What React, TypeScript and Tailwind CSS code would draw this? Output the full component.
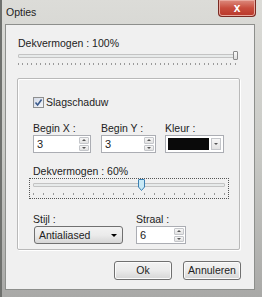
import React from "react";

const font = { fontFamily: '"Liberation Sans", Arial, sans-serif' };

function Ticks({ count, className }: { count: number; className: string }) {
  return (
    <div className={`flex justify-between ${className}`}>
      {Array.from({ length: count }).map((_, i) => (
        <span key={i} className="w-px h-[2px] bg-[#9a9a9a]" />
      ))}
    </div>
  );
}

function SpinBox({ value, width }: { value: string; width: string }) {
  return (
    <div className={`${width} h-[18px] flex items-center border border-[#abadb3] bg-white`}>
      <span className="flex-1 pl-[3px] text-[11px] leading-none">{value}</span>
      <div className="flex flex-col h-full py-px pr-px gap-px">
        <div className="w-[10px] flex-1 border border-[#c4c6ca] rounded-[1px] bg-gradient-to-b from-[#f6f6f6] to-[#e2e2e2] flex items-center justify-center">
          <span className="w-0 h-0 border-x-[2px] border-x-transparent border-b-[2px] border-b-[#555]" />
        </div>
        <div className="w-[10px] flex-1 border border-[#c4c6ca] rounded-[1px] bg-gradient-to-b from-[#f6f6f6] to-[#e2e2e2] flex items-center justify-center">
          <span className="w-0 h-0 border-x-[2px] border-x-transparent border-t-[2px] border-t-[#555]" />
        </div>
      </div>
    </div>
  );
}

function Button({ label }: { label: string }) {
  return (
    <div className="w-[58px] h-[19px] border border-[#707070] rounded-[3px] bg-gradient-to-b from-[#f2f2f2] via-[#ebebeb] to-[#d6d6d6] flex items-center justify-center text-[10.5px] shadow-[inset_0_0_0_1px_#fbfbfb]">
      {label}
    </div>
  );
}

export default function App() {
  return (
    <div
      className="w-[262px] h-[297px] overflow-hidden flex flex-col bg-gradient-to-b from-[#dcdcd8] via-[#c9cac6] to-[#a9a9a7] border-l-2 border-l-[#6f716e] text-[#222]"
      style={font}
    >
      {/* title bar */}
      <div className="h-[22px] flex justify-between items-start pl-[4px] pr-[6px]">
        <span className="pt-[5px] text-[10.5px] leading-[14px] text-[#1e1e1e]">Opties</span>
        <div className="w-[38px] h-[17px] rounded-b-[4px] border border-t-0 border-[#7a2a22] bg-gradient-to-b from-[#dc8a7e] via-[#c84d3e] to-[#b8372a] flex items-center justify-center shadow-[inset_0_0_0_1px_#e9a89e]">
          <span className="text-white text-[12px] font-bold leading-none -mt-px">x</span>
        </div>
      </div>

      {/* client area */}
      <div className="ml-[3px] mr-[7px] mt-[2px] h-[266px] bg-[#f0f0f0] border border-[#8d8f8c] flex flex-col text-[10.5px]">
        <div className="pl-[12px] pr-[16px] pt-[11px]">
          <div className="leading-[14px]">Dekvermogen : 100%</div>
          <div className="relative mt-[1px] h-[10px] flex items-center">
            <div className="w-full h-[4px] border border-[#c3c3c3] bg-[#e7eaea] rounded-[1px]" />
            <div className="absolute right-0 top-0 w-[5px] h-[9px] border border-[#8a8a8a] rounded-[1px] bg-gradient-to-b from-[#fafafa] to-[#dedede]" />
          </div>
          <Ticks count={50} className="mt-[2px] pr-[2px]" />
        </div>

        {/* group box */}
        <div className="ml-[11px] mr-[14px] mt-[13px] h-[172px] border border-[#b9b9b9] shadow-[1px_1px_0_#ffffff,inset_1px_1px_0_#ffffff] rounded-[2px] pl-[15px] pr-[14px] flex flex-col">
          <div className="mt-[16px] flex items-center gap-[2px]">
            <div className="w-[11px] h-[11px] border border-[#8e8f8f] bg-gradient-to-br from-[#d4dbe8] to-[#f4f6f9] flex items-center justify-center">
              <svg width="9" height="9" viewBox="0 0 9 9">
                <path d="M1.5 4.5 L3.6 7 L7.6 1.5" fill="none" stroke="#3a5a8c" strokeWidth="1.6" />
              </svg>
            </div>
            <span className="leading-[14px]">Slagschaduw</span>
          </div>

          <div className="mt-[12px] flex">
            <div className="w-[68px] flex flex-col">
              <span className="leading-[14px]">Begin X :</span>
              <SpinBox value="3" width="w-[58px]" />
            </div>
            <div className="w-[64px] flex flex-col">
              <span className="leading-[14px]">Begin Y :</span>
              <SpinBox value="3" width="w-[55px]" />
            </div>
            <div className="flex flex-col">
              <span className="leading-[14px]">Kleur :</span>
              <div className="w-[59px] h-[18px] border border-[#abadb3] bg-white flex items-center p-[2px] gap-[2px]">
                <div className="flex-1 h-full bg-[#0a0a0a]" />
                <div className="w-[10px] h-full border border-[#c4c6ca] bg-gradient-to-b from-[#f6f6f6] to-[#e2e2e2] flex items-center justify-center">
                  <span className="w-0 h-0 border-x-[2px] border-x-transparent border-t-[2px] border-t-[#555]" />
                </div>
              </div>
            </div>
          </div>

          <div className="mt-[11px] leading-[14px]">Dekvermogen : 60%</div>
          <div className="-ml-[4px] w-[200px] h-[21px] border border-dotted border-[#555] px-[3px] flex flex-col">
            <div className="relative h-[12px] flex items-center">
              <div className="w-full h-[4px] border border-[#c3c3c3] bg-[#e7eaea] rounded-[1px]" />
              <svg className="absolute left-[105px] top-0" width="7" height="12" viewBox="0 0 7 12">
                <path d="M0.5 1 Q0.5 0.5 1 0.5 H6 Q6.5 0.5 6.5 1 V8 L3.5 11.5 L0.5 8 Z" fill="#c8e9f6" stroke="#3c7fb1" />
              </svg>
            </div>
            <Ticks count={20} className="mt-[2px]" />
          </div>

          <div className="mt-[13px] flex">
            <div className="w-[103px] flex flex-col">
              <span className="leading-[14px]">Stijl :</span>
              <div className="ml-px w-[89px] h-[18px] border border-[#707070] rounded-[3px] bg-gradient-to-b from-[#f2f2f2] via-[#ebebeb] to-[#d6d6d6] flex items-center justify-between pl-[4px] pr-[5px]">
                <span className="leading-none">Antialiased</span>
                <span className="w-0 h-0 border-x-[3px] border-x-transparent border-t-[3px] border-t-black" />
              </div>
            </div>
            <div className="flex flex-col">
              <span className="leading-[14px]">Straal :</span>
              <SpinBox value="6" width="w-[50px]" />
            </div>
          </div>
        </div>

        <div className="mt-[11px] pr-[13px] flex justify-end gap-[11px]">
          <Button label="Ok" />
          <Button label="Annuleren" />
        </div>
      </div>
    </div>
  );
}
